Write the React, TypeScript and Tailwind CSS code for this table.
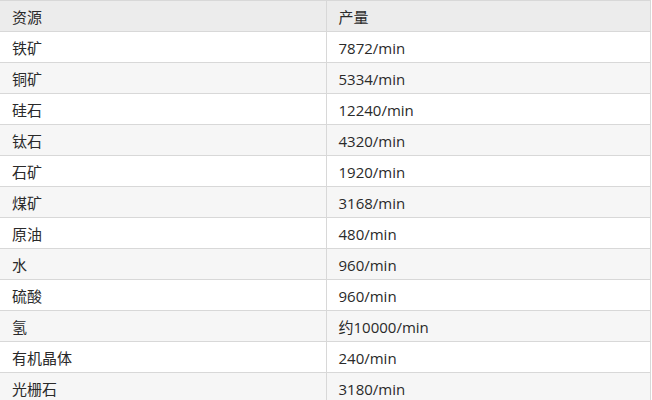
const rows = [
  ["铁矿", "7872/min"],
  ["铜矿", "5334/min"],
  ["硅石", "12240/min"],
  ["钛石", "4320/min"],
  ["石矿", "1920/min"],
  ["煤矿", "3168/min"],
  ["原油", "480/min"],
  ["水", "960/min"],
  ["硫酸", "960/min"],
  ["氢", "约10000/min"],
  ["有机晶体", "240/min"],
  ["光栅石", "3180/min"],
];

const App = () => {
  return (
    <div className="h-[400px] w-[652px] overflow-hidden bg-white font-['Open_Sans','Noto_Sans_CJK_SC',sans-serif] text-[15px] text-[#2a2a2a]">
      <table className="w-[651px] table-fixed border-collapse border-r border-t border-[#d8d8d8]">
        <thead>
          <tr className="h-[31px] border-b border-[#d8d8d8] bg-[#ececec] text-left">
            <th className="w-[326px] border-r border-[#d8d8d8] px-[12px] pt-[2px] font-normal leading-none">资源</th>
            <th className="px-[12px] pt-[2px] font-normal leading-none">产量</th>
          </tr>
        </thead>
        <tbody>
          {rows.map(([name, rate], i) => (
            <tr key={name} className={`h-[31px] border-b border-[#d8d8d8] ${i % 2 === 1 ? "bg-[#f6f6f6]" : "bg-white"}`}>
              <td className="border-r border-[#d8d8d8] px-[12px] pt-[2px] leading-none">{name}</td>
              <td className="px-[12px] pt-[2px] leading-none">{rate}</td>
            </tr>
          ))}
        </tbody>
      </table>
    </div>
  );
};

export default App;
